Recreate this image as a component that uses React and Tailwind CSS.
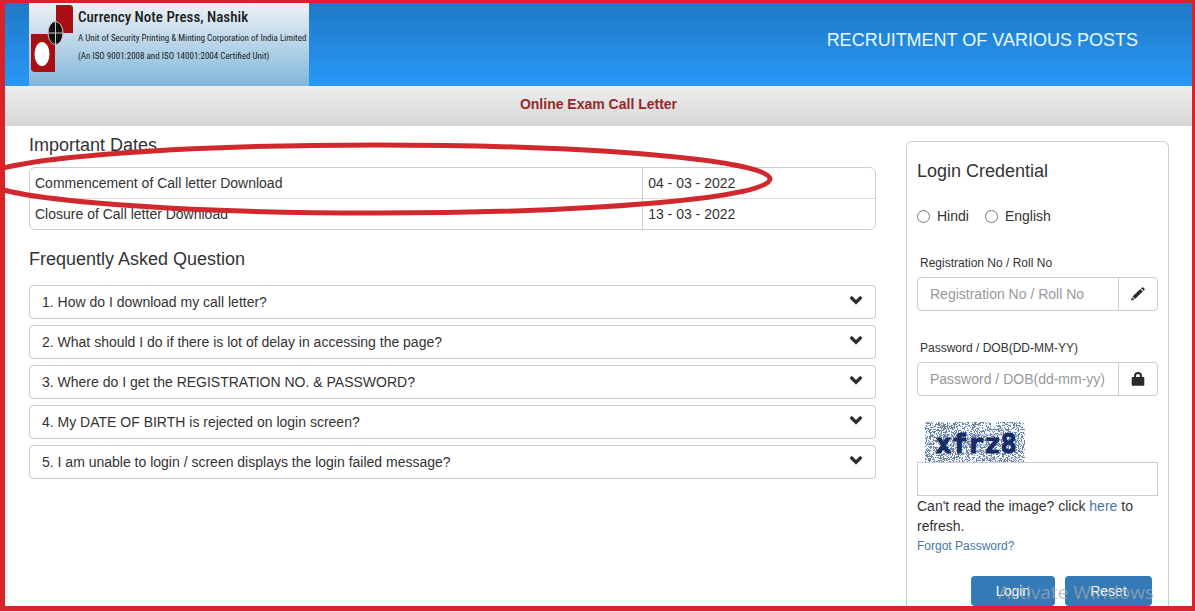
import { useState } from "react";

const dates = [
    { label: "Commencement of Call letter Download", date: "04 - 03 - 2022" },
    { label: "Closure of Call letter Download", date: "13 - 03 - 2022" }
];

const questions = [
    "1. How do I download my call letter?",
    "2. What should I do if there is lot of delay in accessing the page?",
    "3. Where do I get the REGISTRATION NO. & PASSWORD?",
    "4. My DATE OF BIRTH is rejected on login screen?",
    "5. I am unable to login / screen displays the login failed message?"
];

// Speckle pattern for the captcha background
const makeNoise = (width, height) => {
    let seed = 7;
    let d = "";
    for (let y = 0; y < height; y++) {
        for (let x = 0; x < width; x++) {
            seed = (seed * 16807) % 2147483647;
            if (seed / 2147483647 < 0.42) d += `M${x} ${y}h1v1h-1z`;
        }
    }
    return d;
};

const noise = makeNoise(100, 40);

const ChevronIcon = () => (
    <svg className="w-[14px] h-[14px]" viewBox="0 0 14 14" fill="#2b2b2b">
        <path d="M3.200 1.300 7 5 10.800 1.300a.6.6 0 0 1 .8 0l1.500 1.500a.6.6 0 0 1 0 .8L7.400 9.300a.6.6 0 0 1-.8 0L.9 3.600a.6.6 0 0 1 0-.8L2.400 1.300a.6.6 0 0 1 .8 0z" />
    </svg>
);

const PencilIcon = () => (
    <svg className="w-[14px] h-[14px]" viewBox="0 0 14 14" fill="#2b2b2b">
        <path d="M0 13.500 1 10.200 3.500 12.600zM1.500 9.500 9.300 1.900 11.800 4.400 4.100 12zM10 1.300 11 .4a.8.8 0 0 1 1.100 0l1.400 1.400a.8.8 0 0 1 0 1.100l-1 .9z" />
    </svg>
);

const LockIcon = () => (
    <svg className="w-[14px] h-[14px]" viewBox="0 0 14 14" fill="#2b2b2b">
        <path d="M3 5V4a4 4 0 0 1 8 0V5H12.500q.8 0 .8.8v7.200q0 .8-.8.8H1.500q-.8 0-.8-.8V5.800q0-.8.8-.8zM5 5h4V4a2 2 0 0 0-4 0z" />
    </svg>
);

const Logo = () => (
    <svg className="w-[42px] h-[67px] shrink-0" viewBox="0 0 42 67">
        <path d="M25 0h14q3 0 3 3v25H25z" fill="#a90f12" />
        <path d="M0 29h24v38H4q-4 0-4-4z" fill="#a90f12" />
        <ellipse cx="11" cy="49" rx="7.500" ry="12" fill="#fff" />
        <ellipse cx="24.500" cy="28" rx="7.500" ry="11.500" fill="#111" stroke="#e9b9b9" />
        <path d="M24.500 17v22M17 28h15" stroke="#c9c9c9" />
    </svg>
);

const Captcha = () => (
    <svg className="ml-2 w-[100px] h-10 block" viewBox="0 0 100 40" role="img" aria-label="xfrz8">
        <rect width="100" height="40" fill="#eef7fd" />
        <path d={noise} fill="#71839d" />
        <path d="M14 13h80M18 18h76M26 23h66M44 29h38" stroke="#5878b4" opacity="0.6" />
        <text
            x="51"
            y="31"
            textAnchor="middle"
            fill="#172b66"
            stroke="#172b66"
            className="text-[27px] font-bold [font-family:'DejaVu_Sans_Mono',monospace]"
        >
            xfrz8
        </text>
    </svg>
);

const IconField = ({ id, label, placeholder, type, icon }) => (
    <div>
        <label htmlFor={id} className="block pl-[3px] text-xs leading-5">
            {label}
        </label>
        <div className="mt-1 flex h-[34px] rounded border border-[#ccc]">
            <input
                id={id}
                type={type}
                placeholder={placeholder}
                className="min-w-0 flex-1 px-3 outline-none placeholder:text-[#999]"
            />
            <span className="w-[39px] border-l border-[#ccc] flex items-center justify-center">
                {icon}
            </span>
        </div>
    </div>
);

const App = () => {
    const [language, setLanguage] = useState("");

    return (
        <div className="min-h-screen flex flex-col bg-white pb-[2px] text-sm leading-5 text-[#333] [font-family:'Liberation_Sans',Arial,sans-serif]">
            <div className="relative flex-1 flex flex-col overflow-hidden border-[#d9232b] border-t-[3px] border-r-[3px] border-b-[5px] border-l-[5px]">
                {/* Header */}
                <header className="flex justify-between h-[83px] px-6 bg-linear-to-b from-[#2079c5] to-[#2898f8]">
                    <div className="flex w-[280px] pl-[2px] pt-[2px] bg-linear-to-b from-[#edf2f6] to-[#82b6d9]">
                        <Logo />
                        <div className="pl-[5px] text-[#1c1c1c] whitespace-nowrap [font-family:'Roboto_Condensed','Open_Sans_Condensed',sans-serif]">
                            <p className="text-[15px] leading-6 font-medium">Currency Note Press, Nashik</p>
                            <p className="text-[9px] leading-[18px]">
                                A Unit of Security Printing &amp; Minting Corporation of India Limited
                            </p>
                            <p className="text-[9px] leading-[18px]">
                                (An ISO 9001:2008 and ISO 14001:2004 Certified Unit)
                            </p>
                        </div>
                    </div>
                    <h1 className="pt-[27px] pr-[30px] text-lg leading-5 text-[#e8fbff]">
                        RECRUITMENT OF VARIOUS POSTS
                    </h1>
                </header>

                <div className="h-10 pt-2 text-center font-bold text-[#942a2a] bg-linear-to-b from-[#eeeeee] to-[#d6d6d6]">
                    Online Exam Call Letter
                </div>

                <main className="flex-1 flex gap-[30px] pl-6 pr-[23px]">
                    <section className="flex-1 pt-[9px]">
                        <h2 className="text-lg leading-5">Important Dates</h2>
                        <div className="mt-3 rounded-md border border-[#ccc]">
                            <table className="w-full border-collapse">
                                <tbody>
                                    {dates.map((row, index) => (
                                        <tr key={row.label} className={index > 0 ? "border-t border-[#ddd]" : ""}>
                                            <td className="w-[72.5%] px-[5px] py-[5px] border-r border-[#ccc]">
                                                {row.label}
                                            </td>
                                            <td className="px-[5px] py-[5px]">{row.date}</td>
                                        </tr>
                                    ))}
                                </tbody>
                            </table>
                        </div>

                        <h2 className="mt-[19px] text-lg leading-5">Frequently Asked Question</h2>
                        <div className="mt-4 flex flex-col gap-[6px]">
                            {questions.map((question) => (
                                <button
                                    key={question}
                                    type="button"
                                    className="flex h-[34px] items-center justify-between rounded border border-[#ccc] px-3 text-left"
                                >
                                    {question}
                                    <ChevronIcon />
                                </button>
                            ))}
                        </div>
                    </section>

                    {/* Login panel */}
                    <form
                        onSubmit={(e) => e.preventDefault()}
                        className="mt-[15px] w-[263px] rounded-t-md border border-b-0 border-[#ccc] px-[10px] pt-[19px]"
                    >
                        <h2 className="text-lg leading-5">Login Credential</h2>
                        <div className="mt-[25px] flex gap-4">
                            {["Hindi", "English"].map((name) => (
                                <label key={name} className="flex items-center gap-[7px]">
                                    <input
                                        type="radio"
                                        name="language"
                                        value={name}
                                        checked={language === name}
                                        onChange={() => setLanguage(name)}
                                        className="w-[13px] h-[13px]"
                                    />
                                    {name}
                                </label>
                            ))}
                        </div>

                        <div className="mt-[27px] flex flex-col gap-[27px]">
                            <IconField
                                id="registration"
                                type="text"
                                label="Registration No / Roll No"
                                placeholder="Registration No / Roll No"
                                icon={<PencilIcon />}
                            />
                            <IconField
                                id="password"
                                type="password"
                                label="Password / DOB(DD-MM-YY)"
                                placeholder="Password / DOB(dd-mm-yy)"
                                icon={<LockIcon />}
                            />
                        </div>

                        <div className="mt-[26px]">
                            <Captcha />
                            <input
                                type="text"
                                aria-label="Captcha"
                                className="block w-full h-[34px] border border-[#ccc] px-3 outline-none"
                            />
                        </div>
                        <p>
                            Can't read the image? click <a href="#refresh" className="text-[#4677a8]">here</a> to refresh.
                        </p>
                        <a href="#forgot" className="block text-xs leading-5 text-[#4677a8]">
                            Forgot Password?
                        </a>
                        <div className="mt-5 flex justify-end gap-[10px] pr-[6px]">
                            <button type="submit" className="w-[84px] h-[30px] rounded bg-[#337ab7] text-white">
                                Login
                            </button>
                            <button type="reset" className="w-[87px] h-[30px] rounded bg-[#337ab7] text-white">
                                Reset
                            </button>
                        </div>
                    </form>
                </main>

                {/* Hand-drawn highlight around the first date */}
                <svg
                    className="absolute left-0 top-[138px] w-[770px] h-[76px] pointer-events-none"
                    viewBox="0 0 770 76"
                    fill="none"
                >
                    <ellipse cx="371" cy="38" rx="394" ry="34" stroke="#d1282e" strokeWidth="5" />
                </svg>

                <p className="absolute right-[38px] bottom-[2px] text-[19px] leading-6 text-[#a9a9a9]/70 pointer-events-none [font-family:'Open_Sans',sans-serif]">
                    Activate Windows
                </p>
            </div>
        </div>
    );
};

export default App;
